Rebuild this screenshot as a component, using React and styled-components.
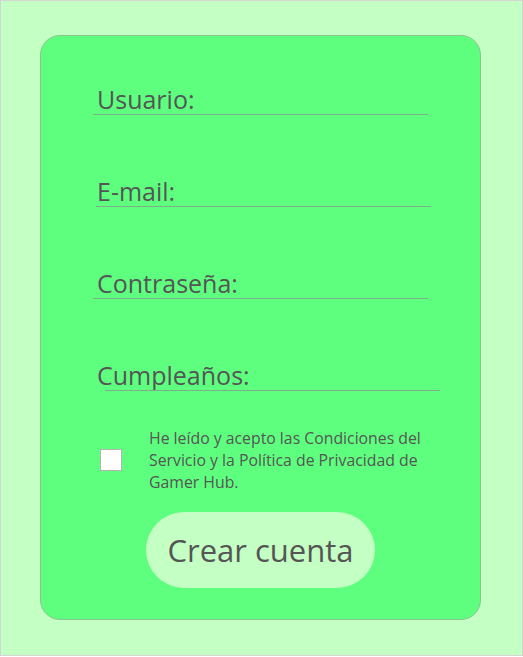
import React from "react";
import styled, { createGlobalStyle } from "styled-components";

const GlobalStyle = createGlobalStyle`
  html, body {
    margin: 0;
    padding: 0;
    background: #ffffff;
  }
  body {
    font-family: "Open Sans", "Noto Sans", sans-serif;
  }
`;

const fields = [
  { label: "Usuario:", lineLeft: 52 },
  { label: "E-mail:", lineLeft: 55 },
  { label: "Contraseña:", lineLeft: 52 },
  { label: "Cumpleaños:", lineLeft: 64 },
];

const App = () => {
  return (
    <>
      <GlobalStyle />
      <Page>
        <Card>
          <Fields>
            {fields.map((f) => (
              <Field key={f.label}>
                <Label>{f.label}</Label>
                <Underline $left={f.lineLeft} />
              </Field>
            ))}
          </Fields>
          <Terms>
            <CheckBox type="checkbox" />
            <TermsText>
              He leído y acepto las Condiciones del Servicio y la Política de
              Privacidad de Gamer Hub.
            </TermsText>
          </Terms>
          <SubmitRow>
            <SubmitButton>Crear cuenta</SubmitButton>
          </SubmitRow>
        </Card>
      </Page>
    </>
  );
};

const Page = styled.div`
  width: 523px;
  height: 656px;
  box-sizing: border-box;
  border: 1px solid #d4d4d4;
  background: #c4ffc4;
  padding: 34px 0 0 39px;
`;

const Card = styled.div`
  width: 441px;
  height: 585px;
  box-sizing: border-box;
  background: #5eff7e;
  border: 1px solid #8cc48f;
  border-radius: 20px;
  padding: 49px 0 0 0;
`;

const Fields = styled.div`
  display: flex;
  flex-direction: column;
  gap: 62px;
`;

const Field = styled.div`
  display: flex;
  flex-direction: column;
`;

const Label = styled.span`
  padding-left: 56px;
  font-size: 25px;
  line-height: 29px;
  color: #555555;
`;

const Underline = styled.div`
  margin-left: ${(p) => p.$left}px;
  width: 335px;
  height: 1px;
  background: #7fae8a;
`;

const Terms = styled.div`
  display: flex;
  align-items: center;
  gap: 27px;
  margin: 36px 0 0 59px;
`;

const CheckBox = styled.input`
  appearance: none;
  margin: 0;
  width: 22px;
  height: 22px;
  box-sizing: border-box;
  background: #ffffff;
  border: 1px solid #b4b4b4;
`;

const TermsText = styled.p`
  margin: 0;
  width: 285px;
  font-size: 15.8px;
  line-height: 22px;
  color: #555555;
`;

const SubmitRow = styled.div`
  display: flex;
  justify-content: center;
  margin-top: 19px;
`;

const SubmitButton = styled.button`
  width: 229px;
  height: 76px;
  border: none;
  border-radius: 38px;
  background: #c4ffc4;
  color: #555555;
  font-family: "Open Sans", "Noto Sans", sans-serif;
  font-size: 31px;
  padding: 0;
  cursor: pointer;
`;

export default App;
